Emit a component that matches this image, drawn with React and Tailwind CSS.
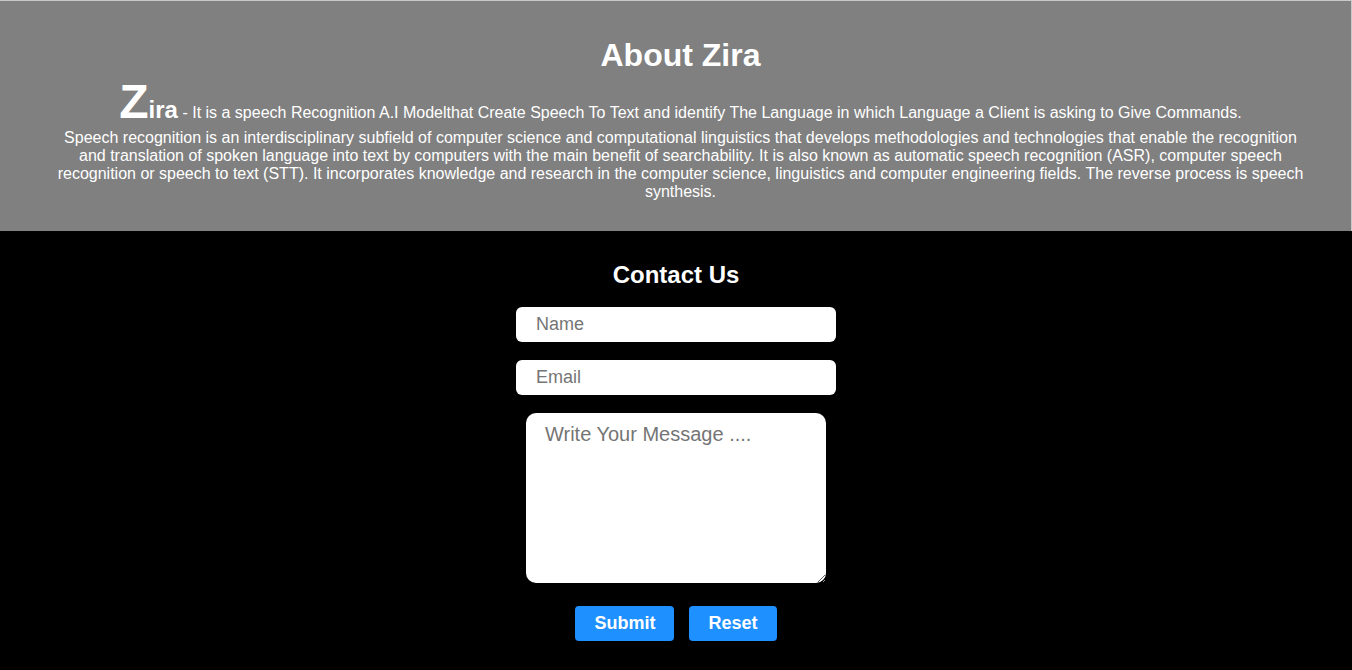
import React from 'react';

const About = () => (
  <section className="bg-[#808080] text-white text-center border-t border-r border-[#c8c8c8] pl-[55px] pr-[45px] pt-[36px] pb-[30px]">
    <h1 className="text-[32px] font-bold leading-[37px] mb-[2px]">About Zira</h1>
    <p className="text-[16px] leading-[52px] h-[53px]">
      <span className="text-[48px] font-bold">Z</span>
      <span className="text-[24px] font-bold">ira</span>
      {' '}- It is a speech Recognition A.I Modelthat Create Speech To Text and identify The Language in which Language a Client is asking to Give Commands.
    </p>
    <p className="text-[16px] leading-[18px]">
      Speech recognition is an interdisciplinary subfield of computer science and computational linguistics that develops methodologies and technologies that enable the recognition and translation of spoken language into text by computers with the main benefit of searchability. It is also known as automatic speech recognition (ASR), computer speech recognition or speech to text (STT). It incorporates knowledge and research in the computer science, linguistics and computer engineering fields. The reverse process is speech synthesis.
    </p>
  </section>
);

const Contact = () => (
  <section className="bg-black flex flex-col items-center pt-[30px] pb-[30px] min-h-[439px]">
    <h2 className="text-white text-[24px] font-bold leading-[28px]">Contact Us</h2>
    <form className="flex flex-col items-center mt-[18px]" onSubmit={(e) => e.preventDefault()}>
      <input
        type="text"
        placeholder="Name"
        className="w-[320px] h-[35px] bg-white rounded-[6px] pl-[20px] pr-3 text-[18px] text-black placeholder:text-[#757575] outline-none"
      />
      <input
        type="email"
        placeholder="Email"
        className="w-[320px] h-[35px] bg-white rounded-[6px] pl-[20px] pr-3 text-[18px] text-black placeholder:text-[#757575] outline-none mt-[18px]"
      />
      <textarea
        placeholder="Write Your Message ...."
        className="w-[300px] h-[170px] bg-white rounded-[10px] pt-[10px] px-[19px] text-[20px] leading-[23px] text-black placeholder:text-[#757575] outline-none mt-[18px] block"
      />
      <div className="flex gap-[15px] mt-[23px]">
        <button type="submit" className="bg-[#1e90ff] text-white text-[18px] font-bold h-[35px] px-[19px] rounded-[4px]">
          Submit
        </button>
        <button type="reset" className="bg-[#1e90ff] text-white text-[18px] font-bold h-[35px] px-[19px] rounded-[4px]">
          Reset
        </button>
      </div>
    </form>
  </section>
);

export default function App() {
  return (
    <div className="font-['Liberation_Sans',Arial,sans-serif] w-[1352px] overflow-hidden">
      <About />
      <Contact />
    </div>
  );
}
